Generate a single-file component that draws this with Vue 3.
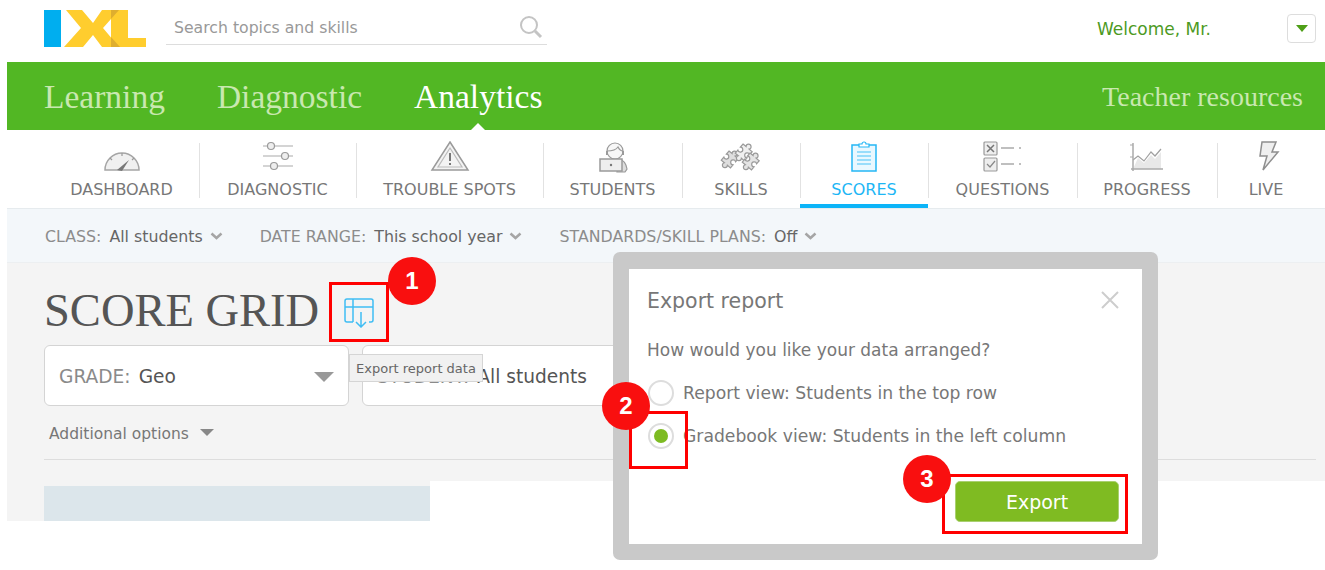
<script setup>
const tabs = [
  { label: 'DASHBOARD', icon: 'dashboard' },
  { label: 'DIAGNOSTIC', icon: 'diagnostic' },
  { label: 'TROUBLE SPOTS', icon: 'trouble' },
  { label: 'STUDENTS', icon: 'students' },
  { label: 'SKILLS', icon: 'skills' },
  { label: 'SCORES', icon: 'scores', active: true },
  { label: 'QUESTIONS', icon: 'questions' },
  { label: 'PROGRESS', icon: 'progress' },
  { label: 'LIVE', icon: 'live' }
]

const filters = [
  { name: 'CLASS:', value: 'All students' },
  { name: 'DATE RANGE:', value: 'This school year' },
  { name: 'STANDARDS/SKILL PLANS:', value: 'Off' }
]

// one jigsaw piece, drawn three times in the skills icon
const piece = 'M0 0h4a2.5 2.5 0 1 1 4 0h4v4a2.5 2.5 0 1 0 0 4v4H8a2.5 2.5 0 1 1-4 0H0V8a2.5 2.5 0 1 0 0-4z'
</script>

<template>
  <div class="page">
    <header class="top">
      <svg class="logo" width="102" height="37" viewBox="0 0 102 37">
        <rect width="17" height="37" fill="#00aeef" />
        <polygon points="22,0 38,0 49,13 58,0 75,0 59,18 75,37 58,37 49,25 39,37 20,37 37,18" fill="#ffcd2e" />
        <polygon points="67,0 84,0 84,28 102,28 102,37 67,37" fill="#ffcd2e" />
        <polygon points="67,0 75,0 67,9" fill="#dfae2e" />
        <polygon points="67,27 76,37 67,37" fill="#dfae2e" />
      </svg>
      <div class="search">
        <span class="search-text">Search topics and skills</span>
        <svg width="24" height="24" viewBox="0 0 24 24" fill="none" stroke="#c4c4c4">
          <circle cx="10" cy="10" r="8" stroke-width="2" />
          <path d="M16 16l6 6" stroke-width="3" />
        </svg>
      </div>
      <span class="welcome">Welcome, Mr.</span>
      <button class="user-btn"><span class="user-caret"></span></button>
    </header>

    <nav class="green-nav">
      <a class="nav-link">Learning</a>
      <a class="nav-link">Diagnostic</a>
      <a class="nav-link current">Analytics</a>
      <a class="resources">Teacher resources</a>
    </nav>

    <div class="tabs">
      <div v-for="t in tabs" :key="t.label" class="tab" :class="{ active: t.active }">
        <svg width="44" height="32" viewBox="0 0 44 32" fill="none" stroke="#9a9a9a" stroke-width="1.2">
          <template v-if="t.icon === 'dashboard'">
            <path d="M5 29a17 17 0 0 1 34 0z" fill="#f0f0f0" stroke="#a5a5a5" stroke-width="1.5" />
            <path d="M17 29l12-10-7 11z" fill="#777" stroke="none" />
            <path d="M22 12v3M10 17l2 2M34 17l-2 2" />
          </template>
          <template v-else-if="t.icon === 'diagnostic'">
            <path d="M7 5h30M7 15h30M7 25h30" stroke="#aaa" />
            <circle cx="15" cy="5" r="3.5" fill="#eee" />
            <circle cx="29" cy="15" r="3.5" fill="#eee" />
            <circle cx="18" cy="25" r="3.5" fill="#eee" />
          </template>
          <template v-else-if="t.icon === 'trouble'">
            <path d="M22 1L40 29H4z" fill="#f3f3f3" stroke-width="1.5" />
            <path d="M22 7L34 26H10z" stroke="#bbb" />
            <path d="M22 12v8M22 22v2" stroke="#777" stroke-width="2" />
          </template>
          <template v-else-if="t.icon === 'students'">
            <path d="M28 18c5 1 7 4 8 10l-2 3h-8z" fill="#ddd" />
            <circle cx="24" cy="10" r="8" fill="#f7f7f7" />
            <path d="M16 10c4 0 9-1 11-4 1 2 3 4 5 4" />
            <path d="M16 10v4M32 10v4" stroke-width="2" />
            <rect x="9" y="18" width="22" height="12" fill="#eee" stroke-width="1.5" />
            <circle cx="20" cy="24" r="1.200" fill="#777" stroke="none" />
          </template>
          <template v-else-if="t.icon === 'skills'">
            <path :d="piece" transform="translate(10 10) rotate(40)" fill="#dedede" />
            <path :d="piece" transform="translate(24 3) rotate(40)" fill="#f0f0f0" />
            <path :d="piece" transform="translate(31 12) rotate(40)" fill="#e4e4e4" />
          </template>
          <template v-else-if="t.icon === 'scores'">
            <rect x="10" y="4" width="24" height="26" fill="#e9f8ff" stroke="#25b7f5" stroke-width="1.500" />
            <path d="M17 6V3h3a2 2 0 0 1 4 0h3v3z" fill="#fff" stroke="#25b7f5" />
            <path d="M15 11h14M15 15h14M15 19h14M15 23h14" stroke="#7dd4fa" stroke-width="1.500" />
          </template>
          <template v-else-if="t.icon === 'questions'">
            <rect x="3" y="1" width="13" height="13" rx="1" fill="#eee" />
            <rect x="3" y="17" width="13" height="13" rx="1" fill="#eee" />
            <path d="M6 4l7 7M13 4l-7 7" stroke="#777" stroke-width="1.500" />
            <path d="M6 23l3 3 5-6" stroke="#888" />
            <path d="M20 7h13M20 23h13" stroke="#aaa" stroke-width="1.500" />
            <path d="M38 7h2M38 23h2" stroke="#aaa" stroke-width="1.500" />
          </template>
          <template v-else-if="t.icon === 'progress'">
            <path d="M8 28l5-11 6 5 7-8 4 4 6-7v17z" fill="#e8e8e8" stroke="none" />
            <path d="M8 19l5-4 6 5 7-9 4 4 6-7" stroke="#a0a0a0" />
            <path d="M8 2v28M6 28h32" stroke="#aaa" stroke-width="1.500" />
            <path d="M5 4h3M5 16h3" stroke="#aaa" />
          </template>
          <template v-else>
            <path d="M18 1h14l-4 10h6L19 29l4-14h-7z" fill="#efefef" stroke="#8f8f8f" stroke-width="1.500" />
          </template>
        </svg>
        <span class="tab-label">{{ t.label }}</span>
      </div>
    </div>

    <div class="filters">
      <div v-for="f in filters" :key="f.name" class="filter">
        <span class="filter-name">{{ f.name }}</span>
        <span class="filter-value">{{ f.value }}</span>
        <svg width="13" height="8" viewBox="0 0 13 8" fill="none" stroke="#a5a5a5" stroke-width="2.500">
          <path d="M1.500 1.500l5 4.500 5-4.500" />
        </svg>
      </div>
    </div>

    <main class="content">
      <div class="title-row">
        <h1 class="title">SCORE GRID</h1>
        <svg class="export-icon" width="30" height="30" viewBox="0 0 30 30" fill="none" stroke="#3fbdf3" stroke-width="1.500">
          <path d="M9 24H3a2 2 0 0 1-2-2V3a2 2 0 0 1 2-2h24a2 2 0 0 1 2 2v19a2 2 0 0 1-2 2h-2" />
          <path d="M1 9h28M9 1v23" />
          <path d="M17 14v15M12 24l5 5 5-5" />
        </svg>
      </div>
      <div class="selects">
        <div class="select grade">
          <span class="select-name">GRADE:</span>
          <span class="select-value">Geo</span>
          <span class="select-caret"></span>
        </div>
        <div class="select student">
          <span class="select-name">STUDENT:</span>
          <span class="select-value">All students</span>
        </div>
      </div>
      <div class="more">Additional options <span class="more-caret"></span></div>
      <div class="rule"></div>
    </main>
    <div class="below">
      <div class="table-head"></div>
    </div>

    <div class="tooltip">Export report data</div>

    <section class="modal">
      <div class="modal-inner">
        <div class="modal-head">
          <span class="modal-title">Export report</span>
          <svg class="modal-close" width="18" height="18" viewBox="0 0 18 18" stroke="#cdcdcd" stroke-width="2">
            <path d="M1 1l16 16M17 1L1 17" />
          </svg>
        </div>
        <p class="question">How would you like your data arranged?</p>
        <div class="option"><span class="radio"></span>Report view: Students in the top row</div>
        <div class="option second"><span class="radio on"></span>Gradebook view: Students in the left column</div>
        <div class="modal-foot"><button class="export-btn">Export</button></div>
      </div>
    </section>

    <div class="mark mark-1"></div>
    <div class="mark mark-2"></div>
    <div class="mark mark-3"></div>
    <div class="step step-1">1</div>
    <div class="step step-2">2</div>
    <div class="step step-3">3</div>
  </div>
</template>

<style>
html, body { margin: 0; background: #fff; }
</style>

<style scoped>
.page {
  position: relative;
  width: 1325px;
  height: 570px;
  overflow: hidden;
  background: #fff;
  font-family: "DejaVu Sans", "Noto Sans", sans-serif;
  color: #666;
}

.top {
  height: 62px;
  display: flex;
  align-items: flex-start;
  box-sizing: border-box;
  padding: 10px 9px 0 44px;
}
.logo { flex: none; }
.search {
  width: 381px;
  height: 35px;
  margin-left: 20px;
  box-sizing: border-box;
  padding-right: 4px;
  display: flex;
  align-items: center;
  justify-content: space-between;
  border-bottom: 1px solid #ddd;
}
.search-text { margin-left: 8px; font-size: 15.700px; color: #999; }
.welcome { margin-left: auto; margin-top: 9px; font-size: 17px; color: #4d9a1f; }
.user-btn {
  width: 29px;
  height: 29px;
  margin-left: 76px;
  margin-top: 4px;
  padding: 0;
  background: #fff;
  border: 1px solid #ddd;
  border-radius: 4px;
  display: flex;
  align-items: center;
  justify-content: center;
}
.user-caret {
  border-left: 6px solid transparent;
  border-right: 6px solid transparent;
  border-top: 7px solid #4e9f17;
}

.green-nav {
  height: 68px;
  margin-left: 7px;
  padding: 2px 22px 0 37px;
  box-sizing: border-box;
  display: flex;
  align-items: center;
  background: #52b724;
  font-family: "Liberation Serif", serif;
  font-size: 33.500px;
}
.nav-link { margin-right: 52px; color: #c9e8b0; position: relative; }
.nav-link.current { color: #fff; }
.nav-link.current::after {
  content: "";
  position: absolute;
  left: 54px;
  bottom: -17px;
  border-left: 10px solid transparent;
  border-right: 10px solid transparent;
  border-bottom: 10px solid #fff;
}
.resources { margin-left: auto; font-size: 28px; color: #c9e8b0; }

.tabs {
  height: 78px;
  box-sizing: border-box;
  margin-left: 44px;
  display: grid;
  grid-template-columns: 155px 157px 187px 139px 118px 128px 149px 140px 98px;
}
.tab {
  position: relative;
  display: flex;
  flex-direction: column;
  align-items: center;
  padding-top: 11px;
}
.tab + .tab::before {
  content: "";
  position: absolute;
  left: 0;
  top: 13px;
  height: 55px;
  width: 1px;
  background: #e2e2e2;
}
.tab-label { margin-top: 5px; font-size: 16px; line-height: 23px; color: #777; }
.tab.active .tab-label { color: #1db6f5; }
.tab.active::after {
  content: "";
  position: absolute;
  left: 0;
  right: 0;
  bottom: 0;
  height: 4px;
  background: #0cb4f8;
}

.filters {
  height: 55px;
  margin-left: 7px;
  padding: 1px 0 0 38px;
  box-sizing: border-box;
  display: flex;
  align-items: center;
  gap: 37px;
  background: #f3f7fa;
  border-top: 1px solid #e6ebee;
  border-bottom: 1px solid #eceff1;
  font-size: 15.800px;
}
.filter { display: flex; align-items: center; }
.filter-name { color: #8c8c8c; margin-right: 8px; }
.filter-value { color: #666; margin-right: 7px; }

.content {
  height: 218px;
  margin-left: 7px;
  padding: 20px 9px 0 37px;
  box-sizing: border-box;
  background: #f4f4f4;
}
.title-row { height: 62px; display: flex; align-items: center; }
.title {
  margin: -8px 0 0;
  font: normal 46.500px "Liberation Serif", serif;
  color: #555;
}
.export-icon { margin: -2px 0 0 25px; }
.selects { display: flex; gap: 13px; }
.select {
  height: 61px;
  box-sizing: border-box;
  padding: 2px 14px 0;
  display: flex;
  align-items: center;
  background: #fff;
  border: 1px solid #d4d4d4;
  border-radius: 6px;
  font-size: 18.600px;
}
.grade { width: 305px; }
.student { width: 305px; }
.select-name { color: #8a8a8a; margin-right: 8px; }
.select-value { color: #555; }
.select-caret {
  margin-left: auto;
  border-left: 10px solid transparent;
  border-right: 10px solid transparent;
  border-top: 10px solid #999;
}
.more { margin: 17px 0 0 5px; font-size: 15.500px; line-height: 22px; color: #777; }
.more-caret {
  display: inline-block;
  margin-left: 6px;
  vertical-align: 3px;
  border-left: 7px solid transparent;
  border-right: 7px solid transparent;
  border-top: 7px solid #888;
}
.rule { height: 1px; margin-top: 14px; background: #ddd; }

.below {
  width: 423px;
  height: 40px;
  margin-left: 7px;
  padding: 5px 0 0 37px;
  box-sizing: border-box;
  background: #f4f4f4;
}
.table-head { width: 386px; height: 35px; background: #dce6eb; }

.tooltip {
  position: absolute;
  left: 349px;
  top: 354px;
  width: 134px;
  height: 28px;
  box-sizing: border-box;
  border: 1px solid #d5d5d5;
  background: #f1f1f1;
  font-size: 13px;
  line-height: 28px;
  text-align: center;
  color: #666;
}

.modal {
  position: absolute;
  left: 613px;
  top: 252px;
  width: 545px;
  height: 308px;
  box-sizing: border-box;
  padding: 17px 16px 16px;
  background: #c9c9c9;
  border-radius: 7px;
}
.modal-inner {
  height: 100%;
  box-sizing: border-box;
  padding: 19px 23px 0 18px;
  background: #fff;
}
.modal-head { display: flex; align-items: center; justify-content: space-between; height: 26px; }
.modal-title { font-size: 20.500px; color: #777; }
.modal-close { margin-bottom: 3px; }
.question { margin: 24px 0 0; font-size: 17px; line-height: 24px; color: #777; }
.option {
  margin-top: 18px;
  height: 26px;
  display: flex;
  align-items: center;
  gap: 9px;
  font-size: 17.200px;
  color: #777;
}
.option.second { margin-top: 17px; }
.radio {
  width: 26px;
  height: 26px;
  box-sizing: border-box;
  margin-left: 1px;
  border: 2px solid #ddd;
  border-radius: 50%;
  background: #fff;
  display: flex;
  align-items: center;
  justify-content: center;
}
.radio.on::after {
  content: "";
  width: 14px;
  height: 14px;
  border-radius: 50%;
  background: #7dbb22;
}
.modal-foot { margin-top: 32px; display: flex; justify-content: flex-end; }
.export-btn {
  width: 164px;
  height: 41px;
  border: 1px solid #a9d070;
  border-radius: 5px;
  background: #7fbb22;
  color: #fff;
  font: 19px "DejaVu Sans", sans-serif;
}

.mark { position: absolute; border: 3px solid #f00; box-sizing: border-box; }
.mark-1 { left: 329px; top: 282px; width: 60px; height: 60px; }
.mark-2 { left: 629px; top: 411px; width: 59px; height: 58px; }
.mark-3 { left: 942px; top: 474px; width: 186px; height: 60px; }
.step {
  position: absolute;
  width: 48px;
  height: 48px;
  border-radius: 50%;
  background: #f90f0f;
  color: #fff;
  font: bold 24px/48px "Liberation Sans", sans-serif;
  text-align: center;
}
.step-1 { left: 388px; top: 257px; }
.step-2 { left: 602px; top: 382px; }
.step-3 { left: 903px; top: 455px; }
</style>
